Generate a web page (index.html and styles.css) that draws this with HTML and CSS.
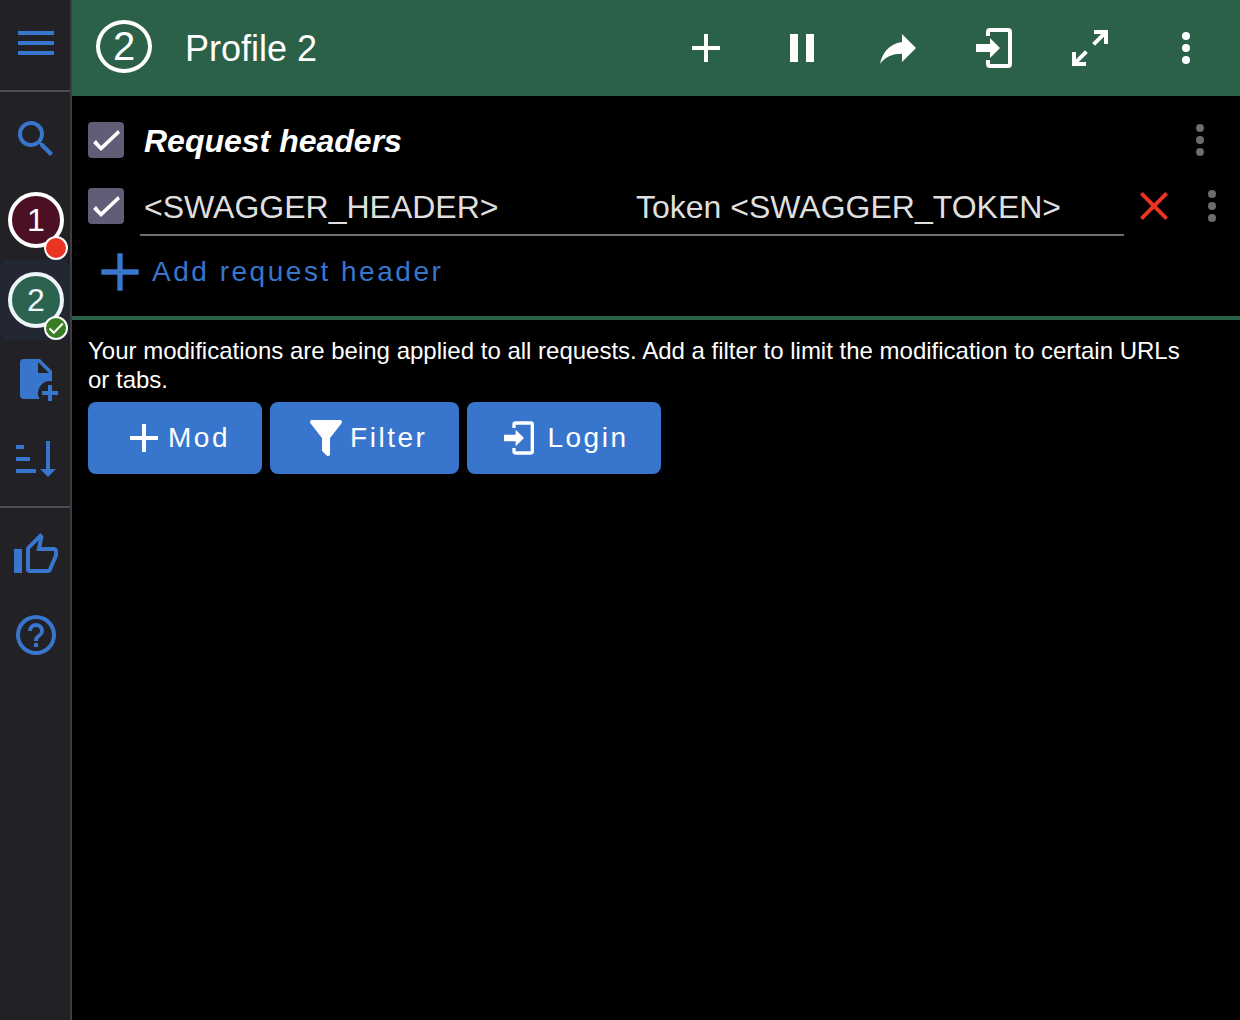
FILE: index.html
```html
<!DOCTYPE html>
<html lang="en">
<head>
<meta charset="utf-8">
<title>Profile 2</title>
<link rel="stylesheet" href="styles.css">
</head>
<body>
<div class="app">
  <nav class="sidebar" aria-label="Profiles and tools">
    <div class="side-top">
      <button class="side-button menu-button" aria-label="Menu"><svg class="icon" viewBox="0 0 24 24"><path d="M3 6h18v2H3zM3 11h18v2H3zM3 16h18v2H3z"/></svg></button>
    </div>
    <div class="side-group">
      <button class="side-button" aria-label="Search"><svg class="icon" viewBox="0 0 24 24"><path d="M9.5 3A6.5 6.5 0 0 1 16 9.5c0 1.61-.59 3.09-1.56 4.23l.27.27h.79l5 5-1.5 1.5-5-5v-.79l-.27-.27A6.52 6.52 0 0 1 9.5 16a6.5 6.5 0 0 1 0-13m0 2C7 5 5 7 5 9.5S7 14 9.5 14 14 12 14 9.5 12 5 9.5 5z"/></svg></button>
      <button class="profile-button"><span class="avatar avatar-wine">1<span class="badge badge-red"></span></span></button>
      <button class="profile-button selected"><span class="avatar avatar-green">2<span class="badge badge-green"><svg viewBox="0 0 20 20"><path d="M3.500 10.500l4.300 4.300 9-9.300" fill="none" stroke="#fff" stroke-width="2"/></svg></span></span></button>
      <button class="side-button" aria-label="New profile"><svg class="icon" viewBox="0 0 24 24"><path fill-rule="evenodd" d="M6 2a2 2 0 0 0-2 2v16a2 2 0 0 0 2 2h7.800A6 6 0 0 1 20 13.100V8l-6-6zM13 3.500L18.500 9H13z"/><path d="M18 15h2v3h3v2h-3v3h-2v-3h-3v-2h3z"/></svg></button>
      <button class="side-button" aria-label="Sort profiles"><svg class="icon" viewBox="0 0 24 24"><path d="M2 5h4v2H2zM2 11h7v2H2zM2 17h10v2H2zM17 3h2v14h3l-4 4-4-4h3z"/></svg></button>
    </div>
    <div class="side-group">
      <button class="side-button" aria-label="Rate"><svg class="icon" viewBox="0 0 24 24"><path d="M5,9V21H1V9H5M9,21A2,2 0 0,1 7,19V9C7,8.45 7.22,7.95 7.59,7.59L14.17,1L15.23,2.06C15.5,2.33 15.67,2.7 15.67,3.11L15.64,3.43L14.69,8H21C22.11,8 23,8.9 23,10V12C23,12.26 22.95,12.5 22.86,12.73L19.84,19.78C19.54,20.5 18.83,21 18,21H9M9,19H18.03L21,12V10H12.21L13.34,4.68L9,9.03V19Z"/></svg></button>
      <button class="side-button" aria-label="Help"><svg class="icon" viewBox="0 0 24 24"><path d="M11,18H13V16H11V18M12,2A10,10 0 0,0 2,12A10,10 0 0,0 12,22A10,10 0 0,0 22,12A10,10 0 0,0 12,2M12,20C7.59,20 4,16.41 4,12C4,7.59 7.59,4 12,4C16.41,4 20,7.59 20,12C20,16.41 16.41,20 12,20M12,6A4,4 0 0,0 8,10H10A2,2 0 0,1 12,8A2,2 0 0,1 14,10C14,12 11,11.75 11,15H13C13,12.75 16,12.5 16,10A4,4 0 0,0 12,6Z"/></svg></button>
    </div>
  </nav>

  <div class="content">
    <header class="toolbar">
      <span class="profile-number">2</span>
      <h1 class="title">Profile 2</h1>
      <button class="tool" aria-label="Add"><svg class="icon" viewBox="0 0 24 24"><path d="M19 13h-6v6h-2v-6H5v-2h6V5h2v6h6z"/></svg></button>
      <button class="tool" aria-label="Pause"><svg class="icon" viewBox="0 0 24 24"><path d="M14 19h4V5h-4zM6 19h4V5H6z"/></svg></button>
      <button class="tool" aria-label="Share"><svg class="icon" viewBox="0 0 24 24"><path d="M21 12l-7-7v4C7 10 4 15 3 20c2.500-3.500 6-5.100 11-5.100V19z"/></svg></button>
      <button class="tool" aria-label="Sign in"><svg class="icon" viewBox="0 0 24 24"><path d="M10 17v-3H3v-4h7V7l5 5zM10 2h9a2 2 0 0 1 2 2v16a2 2 0 0 1-2 2h-9a2 2 0 0 1-2-2v-2h2v2h9V4h-9v2H8V4a2 2 0 0 1 2-2z"/></svg></button>
      <button class="tool" aria-label="Expand"><svg class="icon" viewBox="0 0 24 24"><path d="M10,21V19H6.41L10.91,14.5L9.5,13.09L5,17.59V14H3V21H10M14.5,10.91L19,6.41V10H21V3H14V5H17.59L13.09,9.5L14.5,10.91Z"/></svg></button>
      <button class="tool" aria-label="More"><svg class="icon" viewBox="0 0 24 24"><circle cx="12" cy="6" r="2"/><circle cx="12" cy="12" r="2"/><circle cx="12" cy="18" r="2"/></svg></button>
    </header>

    <section class="headers">
      <div class="row row-heading">
        <input class="check" type="checkbox" id="all" checked>
        <label class="heading" for="all">Request headers</label>
        <button class="more" aria-label="Section menu"><svg class="icon" viewBox="0 0 24 24"><circle cx="12" cy="6" r="2"/><circle cx="12" cy="12" r="2"/><circle cx="12" cy="18" r="2"/></svg></button>
      </div>
      <div class="row">
        <input class="check" type="checkbox" aria-label="Enable header" checked>
        <div class="fields">
          <input class="field" type="text" aria-label="Name" value="&lt;SWAGGER_HEADER&gt;">
          <input class="field" type="text" aria-label="Value" value="Token &lt;SWAGGER_TOKEN&gt;">
        </div>
        <button class="remove" aria-label="Remove"><svg class="icon" viewBox="0 0 24 24"><path d="M19,6.410L17.590,5L12,10.590L6.410,5L5,6.410L10.590,12L5,17.590L6.410,19L12,13.410L17.590,19L19,17.590L13.410,12Z"/></svg></button>
        <button class="more more-row" aria-label="Header menu"><svg class="icon" viewBox="0 0 24 24"><circle cx="12" cy="6" r="2"/><circle cx="12" cy="12" r="2"/><circle cx="12" cy="18" r="2"/></svg></button>
      </div>
      <div class="row">
        <button class="add"><svg class="icon-large" viewBox="0 0 24 24"><path d="M19 13h-6v6h-2v-6H5v-2h6V5h2v6h6z"/></svg>Add request header</button>
      </div>
    </section>

    <main class="notice">
      <p class="message">Your modifications are being applied to all requests. Add a filter to limit the modification to certain URLs or tabs.</p>
      <div class="actions">
        <button class="action"><svg class="icon" viewBox="0 0 24 24"><path d="M19 13h-6v6h-2v-6H5v-2h6V5h2v6h6z"/></svg>Mod</button>
        <button class="action"><svg class="icon" viewBox="0 0 24 24"><path d="M14,12V19.88C14.04,20.18 13.94,20.5 13.71,20.71C13.32,21.1 12.69,21.1 12.3,20.71L10.29,18.7C10.06,18.47 9.96,18.16 10,17.87V12H9.97L4.21,4.62C3.87,4.19 3.95,3.56 4.38,3.22C4.57,3.08 4.78,3 5,3H19C19.22,3 19.43,3.08 19.62,3.22C20.05,3.56 20.13,4.19 19.79,4.62L14.03,12H14Z"/></svg>Filter</button>
        <button class="action action-login"><svg class="icon-small" viewBox="0 0 24 24"><path d="M10 17v-3H3v-4h7V7l5 5zM10 2h9a2 2 0 0 1 2 2v16a2 2 0 0 1-2 2h-9a2 2 0 0 1-2-2v-2h2v2h9V4h-9v2H8V4a2 2 0 0 1 2-2z"/></svg>Login</button>
      </div>
    </main>
  </div>
</div>
</body>
</html>
```
FILE: styles.css
```css
* { box-sizing: border-box; }

body {
  margin: 0;
  background: #000;
  color: #fff;
  font-family: "Liberation Sans", Arial, sans-serif;
}

button {
  display: flex;
  align-items: center;
  justify-content: center;
  margin: 0;
  padding: 0;
  border: 0;
  background: none;
  color: inherit;
  font: inherit;
  cursor: pointer;
}

svg { display: block; flex: none; fill: currentColor; }
.icon { width: 48px; height: 48px; }
.icon-small { width: 40px; height: 40px; }
.icon-large { width: 64px; height: 64px; }

.app { display: flex; min-height: 100vh; }

/* Sidebar */
.sidebar {
  flex: none;
  width: 72px;
  border-right: 2px solid #3d3d41;
  background: #222126;
  color: #3876ce;
}
.side-top { border-bottom: 2px solid #4e4d53; }
.side-group { padding: 8px 0 6px; }
.side-group + .side-group { border-top: 2px solid #4e4d53; }
.side-button { width: 72px; height: 80px; padding-bottom: 2px; }
.side-button.menu-button { height: 90px; padding-bottom: 4px; }
.profile-button {
  justify-content: flex-start;
  width: 100%;
  height: 80px;
  padding-left: 8px;
  border-radius: 8px;
}
.profile-button.selected { background: #232731; }
.avatar {
  position: relative;
  display: flex;
  align-items: center;
  justify-content: center;
  width: 56px;
  height: 56px;
  border: 4px solid #fff;
  border-radius: 50%;
  color: #fff;
  font-size: 32px;
}
.avatar-wine { background: #4b1024; }
.avatar-green { border-color: #eff4fb; background: #2c6350; color: #eff4fb; }
.badge {
  position: absolute;
  right: -8px;
  bottom: -16px;
  width: 24px;
  height: 24px;
  border: 2px solid #fff;
  border-radius: 50%;
}
.badge-red { background: #eb3323; }
.badge-green { background: #377d22; }

/* Toolbar */
.content { flex: 1; min-width: 0; }
.toolbar {
  display: flex;
  align-items: center;
  height: 96px;
  padding: 0 6px 0 24px;
  background: #2b6049;
}
.profile-number {
  display: flex;
  align-items: center;
  justify-content: center;
  width: 56px;
  height: 53px;
  margin-bottom: 3px;
  border: 4px solid #fff;
  border-radius: 50%;
  font-size: 40px;
}
.title { flex: 1; margin: 0; padding: 2px 0 0 33px; font-size: 36px; font-weight: 400; }
.tool { width: 96px; height: 96px; }

/* Header list */
.headers { padding: 11px 0; border-bottom: 4px solid #2b6049; }
.row { display: flex; align-items: center; height: 66px; padding-left: 16px; }
.row-heading { padding-right: 16px; }
.check {
  flex: none;
  width: 36px;
  height: 36px;
  margin: 0 16px 0 0;
  appearance: none;
  border-radius: 4px;
  background: #5f5e76;
}
.check:checked::before {
  content: "";
  display: block;
  width: 36px;
  height: 36px;
  background: #fff;
  clip-path: polygon(5px 21px, 8px 18px, 13px 24px, 30px 8px, 32px 11px, 13px 29px);
}
.heading { flex: 1; padding: 2px 0 0 4px; font-size: 32px; font-style: italic; font-weight: 700; }
.more { color: #6c6c6c; }
.more-row { width: 56px; }
.fields { display: flex; flex: 1; min-width: 0; }
.field {
  flex: 1;
  min-width: 0;
  height: 60px;
  padding: 4px 4px 0;
  border: 0;
  border-bottom: 2px solid #707070;
  background: none;
  color: #dfdfdf;
  font: inherit;
  font-size: 32px;
  outline: 0;
}
.remove { width: 60px; color: #eb3323; }
.add { color: #3876ce; font-size: 28px; letter-spacing: 0.09em; }

/* Notice */
.notice { padding: 16px; }
.message { margin: 0 0 8px; padding-right: 24px; font-size: 24px; line-height: 29px; }
.actions { display: flex; gap: 8px; }
.action {
  height: 72px;
  padding: 0 32px;
  border-radius: 8px;
  background: #3876ce;
  font-size: 28px;
  letter-spacing: 0.09em;
}
.action-login { gap: 8px; }
```
